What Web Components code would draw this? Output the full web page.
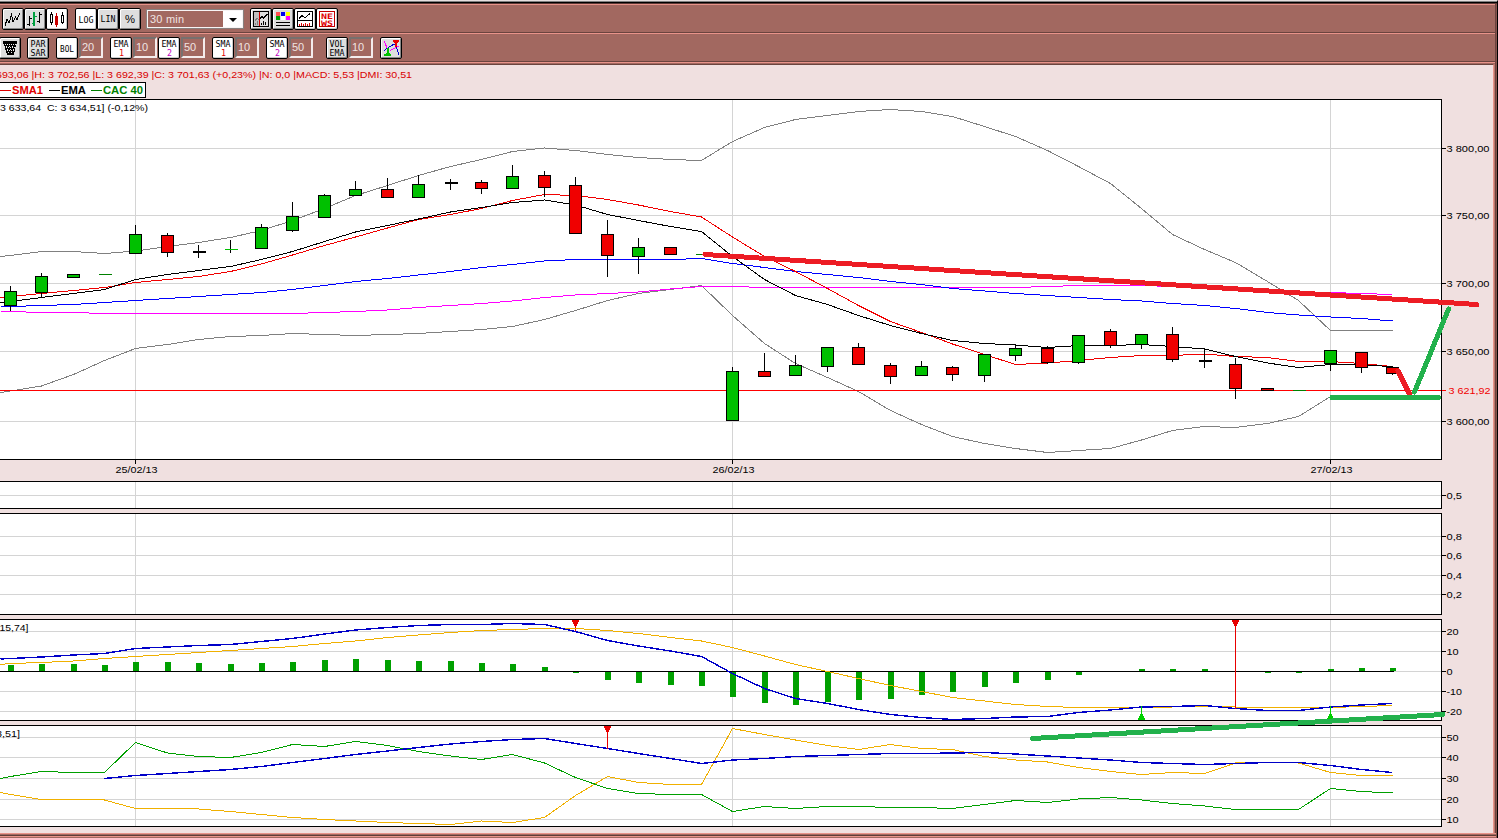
<!DOCTYPE html>
<html lang="fr">
<head>
<meta charset="utf-8">
<title>CAC 40</title>
<style>
  html, body {
    margin: 0;
    height: 838px;
    overflow: hidden;
    background: #a26860;
  }
  body {
    font-family: "Liberation Sans", Arial, sans-serif;
    font-size: 11px;
    color: #000;
  }
</style>
</head>
<body>
<trading-window>
  <tool-row slot="tools">
    <tool-button icon="line" style="margin-left:2px"></tool-button>
    <tool-button icon="ohlc"></tool-button>
    <tool-button icon="candle" active></tool-button>
    <tool-button icon="log" active style="margin-left:7px"></tool-button>
    <tool-button icon="lin"></tool-button>
    <tool-button icon="pct"></tool-button>
    <period-select style="margin-left:5px">30 min</period-select>
    <tool-button icon="split" style="margin-left:6px"></tool-button>
    <tool-button icon="colors"></tool-button>
    <tool-button icon="volume" active></tool-button>
    <tool-button icon="news" active></tool-button>
  </tool-row>
  <tool-row slot="tools" class="second">
    <tool-button icon="basket" style="margin-left:-1px"></tool-button>
    <tool-button icon="parsar" style="margin-left:6px"></tool-button>
    <tool-button icon="bol" active style="margin-left:7px"></tool-button>
    <num-field>20</num-field>
    <tool-button icon="ema1" active style="margin-left:6px"></tool-button>
    <num-field>10</num-field>
    <tool-button icon="ema2" active></tool-button>
    <num-field>50</num-field>
    <tool-button icon="sma1" active style="margin-left:6px"></tool-button>
    <num-field>10</num-field>
    <tool-button icon="sma2" active style="margin-left:6px"></tool-button>
    <num-field>50</num-field>
    <tool-button icon="volema" style="margin-left:12px"></tool-button>
    <num-field>10</num-field>
    <tool-button icon="signals" style="margin-left:6px"></tool-button>
  </tool-row>
  <quote-line></quote-line>
  <series-legend></series-legend>
  <chart-pane name="price" top="99" bottom="459" height="382"></chart-pane>
  <chart-pane name="volume" top="481" bottom="508" height="32"></chart-pane>
  <chart-pane name="empty" top="513" bottom="614" height="106"></chart-pane>
  <chart-pane name="macd" top="619" bottom="720" height="106"></chart-pane>
  <chart-pane name="dmi" top="725" bottom="826" height="106"></chart-pane>
  <trend-lines slot="overlay"></trend-lines>
</trading-window>

<script>
// Abscisse de chaque barre de 30 minutes
const X = [10, 41, 73, 104, 135, 167, 198, 230, 261, 292, 324, 355, 387, 418, 450, 481, 512, 544, 575, 607,
  638, 670, 701, 732, 764, 795, 827, 858, 890, 921, 952, 984, 1015, 1047, 1078, 1110, 1141, 1172, 1204,
  1235, 1267, 1298, 1330, 1361, 1392];

const JOURS = [[135, '25/02/13'], [732, '26/02/13'], [1330, '27/02/13']];
const DROITE = 1441;

// [haut, haut du corps, bas du corps, bas, sens]  v = hausse, r = baisse, d = doji, l = trait vert, w = trait vert et mèche
const BOUGIES = [
  [286, 291, 305, 310, 'v'], [273, 276, 292, 297, 'v'], [274, 274, 277, 277, 'v'], [274, 274, 274, 274, 'l'],
  [225, 234, 253, 253, 'v'], [233, 235, 252, 256, 'r'], [244, 251, 252, 256, 'd'], [239, 249, 249, 251, 'w'],
  [224, 227, 248, 248, 'v'], [202, 216, 230, 231, 'v'], [194, 195, 217, 217, 'v'], [181, 189, 195, 195, 'v'],
  [178, 189, 197, 197, 'r'], [175, 184, 197, 197, 'v'], [178, 182, 183, 188, 'd'], [180, 182, 188, 193, 'r'],
  [165, 176, 188, 188, 'v'], [171, 175, 187, 196, 'r'], [177, 185, 233, 233, 'r'], [220, 234, 255, 276, 'r'],
  [238, 247, 256, 273, 'v'], [247, 247, 254, 254, 'r'], [254, 254, 254, 254, 'l'], [367, 371, 420, 420, 'v'],
  [353, 371, 376, 376, 'r'], [355, 365, 375, 375, 'v'], [347, 347, 366, 371, 'v'], [343, 347, 364, 364, 'r'],
  [363, 365, 376, 383, 'r'], [361, 366, 375, 375, 'v'], [366, 367, 374, 380, 'r'], [354, 354, 375, 381, 'v'],
  [345, 348, 355, 360, 'v'], [346, 348, 362, 363, 'r'], [335, 335, 362, 363, 'v'], [329, 331, 345, 347, 'r'],
  [334, 334, 344, 348, 'v'], [327, 334, 359, 361, 'r'], [348, 360, 361, 366, 'd'], [358, 364, 388, 398, 'r'],
  [388, 388, 390, 390, 'r'], [390, 390, 390, 390, 'l'], [350, 350, 363, 370, 'v'], [352, 352, 367, 372, 'r'],
  [366, 367, 373, 374, 'r']
];

// Courbes : une ordonnée par barre, précédée du point au bord gauche
const PRIX = [
  ['#808080', 256, 255, 251, 251, 253, 250.5, 246, 242, 237, 230, 220, 208, 195, 185, 175, 166, 159, 151, 147.5, 150, 154,
    157, 159, 160, 141, 127, 119, 115, 111, 109, 111, 116, 126, 136, 150, 166, 183, 208, 234, 249, 262, 281, 300, 330, 330, 330],
  ['#808080', 392, 390.5, 385.5, 374, 360, 348, 344, 339, 336, 335, 333, 334, 335, 334, 333, 331, 329, 326, 319, 310, 300,
    293, 289, 285, 315, 343, 363, 377, 391, 410, 424, 436, 443, 448, 452, 450, 448, 439.5, 430, 426, 427, 423, 416, 396],
  ['#ff00ff', 311, 311, 312, 312, 313, 313, 313, 313, 313, 313, 313, 312, 311, 309.5, 307, 305, 303, 300.5, 297, 294.5, 293,
    291.5, 288.5, 286, 286, 287, 287, 287, 287, 287, 287, 287, 287, 287, 286, 285, 285, 285, 286, 287, 288, 289, 291, 292, 293, 294],
  ['#0000ff', 306, 306, 305, 304, 302, 300, 298, 296, 294, 292, 289, 285, 281, 278, 274.5, 271, 267, 264, 260.5, 259, 259,
    259, 259, 258, 263, 267, 271, 274, 277, 281, 284, 288, 290.5, 293, 295, 297, 299, 300.5, 303, 305, 308, 312, 314.5, 316.5, 318, 320.5],
  ['#f00000', 297, 296, 293, 290, 287, 282, 279, 276, 271, 263.5, 254.5, 245, 236.5, 227.5, 219, 214, 208, 200, 194, 195, 199,
    204.5, 211, 216.5, 236.5, 256, 271, 288, 305, 321, 332, 343.5, 354, 364, 362.5, 360, 357, 355, 355, 353.5, 356, 357, 361, 361, 363, 366],
  ['#000', 302, 301, 297, 293, 289, 279, 274, 270, 266, 259, 251, 241, 231.5, 225, 218.5, 211.5, 207, 202, 199.5, 204.5, 214,
    220, 226, 231, 256, 279, 295, 304, 315, 325, 333, 340, 343, 344.5, 347, 345, 345, 344, 346, 348.5, 356, 362.5, 367, 364, 364.5, 366]
];

const MACD = [
  ['#f0b000', 664, 663, 662, 660.5, 658, 656, 654, 652, 650, 648, 646, 643, 640.5, 637, 634.5, 632, 630, 629, 628, 628, 630,
    633, 637, 640.5, 647, 655.5, 664, 671, 678, 685, 691, 697, 700.5, 704, 706, 707, 707, 707, 706.5, 706, 706.5, 707, 707, 707, 706, 705],
  ['#0000c8', 658.5, 658, 656.5, 654.5, 653, 648, 646.5, 645, 644, 641, 638, 633.5, 629.5, 627, 625, 624, 624, 623, 624, 631, 640,
    645.5, 650.5, 656, 673, 688, 698, 703, 709, 714, 717, 719, 718, 716.5, 716, 712, 709.5, 706.5, 706, 705, 708, 710, 710, 706.5, 704.5, 703]
];

// Extrémité de chaque bâton de l'histogramme MACD, 671 = zéro
const HISTO = [665, 664, 664, 665, 662, 662, 663, 664, 663, 662, 660, 659, 660, 661, 661, 663, 664, 667, 672, 679,
  682, 684, 685, 696, 702, 704, 701, 699, 698, 694, 691, 686, 682, 679, 674, 0, 669, 669, 669, 0, 672, 672, 669, 668, 668];

const DMI = [
  ['#f0b000', 792, 794, 799, 799, 799.5, 808, 808, 808.5, 811, 814, 817, 819, 820.5, 822, 823, 824, 820.5, 822, 817, 795, 776,
    782, 784, 784, 728, 734, 739.5, 745, 749, 744, 748, 749, 756, 759.5, 761.5, 767, 771, 774, 772, 773, 762.5, 762, 762.5, 772, 775, 775],
  ['#00a000', 778, 776, 771, 772, 772, 742, 752.5, 756, 757, 752, 744, 746, 741, 745, 751, 755.5, 759, 754, 762.5, 777, 788,
    793, 794, 794, 811, 806, 808, 806, 806, 807, 807, 808, 804, 800, 802, 798.5, 797, 799.5, 803, 805.5, 809, 809, 809, 788, 791, 792.5],
  ['#0000c8', null, null, null, null, 778, 775, 773, 771, 769, 766, 762, 758, 754, 750.5, 747, 743.5, 741, 739, 738, 743, 748,
    753, 758, 763, 759.5, 758, 756, 755, 754, 753, 753, 752.5, 752, 753.5, 755.5, 757.5, 759.5, 762, 763, 764, 763, 762, 762, 765, 769, 772]
];

const AXES = {
  price: [[148, '3 800,00'], [215, '3 750,00'], [283, '3 700,00'], [351, '3 650,00'], [421, '3 600,00']],
  volume: [[495, '0,5']],
  empty: [[536, '0,8'], [555, '0,6'], [575, '0,4'], [594, '0,2']],
  macd: [[631, '20'], [651, '10'], [671, '0'], [691, '-10'], [711, '-20']],
  dmi: [[737, '50'], [757, '40'], [778, '30'], [799, '20'], [819, '10']]
};

// Largeur des libellés d'axe : chiffres 6px, virgule et espace 3px
function largeur(t) {
  let w = 0;
  for (const c of t) w += /[0-9]/.test(c) ? 6.1 : 3.2;
  return w;
}

function texte(x, y, t, w, extra = '') {
  return `<text x="${x}" y="${y}" textLength="${w}" lengthAdjust="spacingAndGlyphs" xml:space="preserve" ${extra}>${t}</text>`;
}

function courbe([couleur, ...ys], ep = 1) {
  const pts = ys.map((y, i) => y === null ? null : `${i ? X[i - 1] : 0},${y}`).filter(Boolean).join(' ');
  return `<polyline points="${pts}" fill="none" stroke="${couleur}" stroke-width="${ep}"/>`;
}

function bougie([h, a, b, l, sens], i) {
  const x = X[i];
  if (sens === 'l') return `<path d="M${x - 6} ${a}h13" stroke="#008000"/>`;
  if (sens === 'w') return `<path d="M${x} ${h}V${l + 1}" stroke="#000"/><path d="M${x - 6} ${a}h13" stroke="#00c000"/>`;
  if (sens === 'd') return `<path d="M${x} ${h}V${l + 1}M${x - 6} ${a}h13M${x - 6} ${b}h13" stroke="#000"/>`;
  return `<path d="M${x} ${h - .5}V${l + .5}" stroke="#000"/>
    <rect x="${x - 6}" y="${a}" width="12" height="${b - a}" fill="${sens === 'v' ? '#00c000' : '#f00000'}" stroke="#000"/>`;
}

function vente(x, y, fin) {
  return `<path d="M${x} ${y}V${fin}" stroke="#e80000"/>
    <path d="M${x - 3.5} ${y + .5}h7v2h-1v2h-1v2h-3v-2h-1v-2h-1z" fill="#e80000"/>`;
}

function achat(x, y, debut) {
  return `<path d="M${x} ${debut}V${y}" stroke="#00d000"/>
    <path d="M${x - 3.5} ${y - .5}h7v-2h-1v-2h-1v-2h-3v2h-1v2h-1z" fill="#00d000"/>`;
}

/**
 * Fenêtre principale : cadre, barres d'outils puis zone des graphiques.
 */
class TradingWindow extends HTMLElement {
  constructor() {
    super();
    this.attachShadow({ mode: 'open' }).innerHTML = `
      <style>
        :host {
          display: flex;
          flex-direction: column;
          position: relative;
          box-sizing: border-box;
          width: 1498px;
          height: 838px;
          border-top: 1px solid #e8e0e0;
          border-right: 1px solid #000;
        }
        .edge { height: 3px; background: linear-gradient(#808080 1px, #000 1px 2px, #5a3834 2px); }
        .frame {
          flex: 1;
          display: flex;
          flex-direction: column;
          border-right: 1px solid #87544d;
          box-shadow: inset -1px 0 #6b443f;
        }
        .body {
          height: 768px;
          width: 1493px;
          background: #f0e0e0;
          border-top: 1px solid #6b443f;
          border-right: 1px solid #e8938a;
          box-shadow: 1px 0 #b9766d;
        }
        .foot {
          height: 5px;
          background: linear-gradient(#e8938a 1px, #a26860 1px 2px, #5e3d38 2px 3px, #e8938a 3px 4px, #a26860 4px);
        }
      </style>
      <div class="edge"></div>
      <div class="frame">
        <slot name="tools"></slot>
        <div class="body"><slot></slot></div>
        <div class="foot"></div>
      </div>
      <slot name="overlay"></slot>`;
  }
}

/** Rangée d'outils avec son relief en bas. */
class ToolRow extends HTMLElement {
  constructor() {
    super();
    this.attachShadow({ mode: 'open' }).innerHTML = `
      <style>
        :host {
          display: flex;
          align-items: flex-start;
          box-sizing: border-box;
          width: 1495px;
          height: 29px;
          padding-top: 3px;
          border-top: 1px solid #e8938a;
          border-bottom: 1px solid #6b443f;
          background: #a26860;
        }
        :host(.second) { height: 31px; border-bottom: 0; box-shadow: inset 0 -1px #a26860, inset 0 -2px #e8938a, inset 0 -3px #6b443f; }
      </style>
      <slot></slot>`;
  }
}

const noir = 'fill="none" stroke="#000"';
const deuxLignes = (a, b, c2 = '#000', x2 = 1.5, w2 = 15) =>
  texte(1.5, 8, a, 15, 'font-size="9"') + texte(x2, 16.5, b, w2, `font-size="9" fill="${c2}"`);

const ICONES = {
  line: `<path d="M1 15.500L3 9.500L5 13L7.500 5L9 12L11.500 7L13 9.500L16 3" ${noir}/>`,
  ohlc: `<path d="M3.500 6v10M1 14.500h2M4 8.500h2M13.500 2v11M11 11.500h2M14 4.500h2" ${noir}/>
    <path d="M8 2v14" fill="none" stroke="#00a040" stroke-width="2"/><path d="M6 13.500h2M9 6.500h2" stroke="#00a040"/>`,
  candle: `<path d="M3.500 2v2M3.500 12v3M14.500 2v3M14.500 12v2" ${noir}/><path d="M2.500 4.500h2v8h-2zM13.500 5.500h2v7h-2z" ${noir}/>
    <path d="M8.500 3v14" stroke="#c80000"/><rect x="7" y="6" width="3" height="9" fill="#c80000"/>`,
  log: texte(1.5, 13, 'LOG', 15, 'font-size="9.5"'),
  lin: texte(1.5, 12, 'LIN', 15, 'font-size="9.5"'),
  pct: texte(4, 13, '%', 10, 'font-size="11" font-family="Liberation Sans, sans-serif"'),
  split: `<rect x="1" y="1" width="7" height="16" fill="#c0c0c0"/><rect x="1.500" y="1.500" width="15" height="15" ${noir}/>
    <path d="M3.500 15v-2M5.500 15v-4" stroke="#808080"/><path d="M9.500 15v-2M11.500 15v-4M13.500 15v-3" stroke="#000"/>
    <path d="M3 11L5 8L7 10" fill="none" stroke="#808080"/><path d="M8 8.500L10 6.500L11.500 8L15.500 4" ${noir}/><path d="M7.500 2v14" stroke="#d00000"/>`,
  colors: `<path d="M2 2h4v4H2z" fill="#ff5050"/><path d="M7 2h4v4H7z" fill="#0000f0"/><path d="M12 2h4v4h-4z" fill="#ff0"/>
    <path d="M2 6h4v4H2z" fill="#00a000"/><path d="M7 6h4v4H7z" fill="#fff"/><path d="M12 6h4v4h-4z" fill="#f0f"/>
    <path d="M2 12h14v1H2zM2 15h14v1H2z"/>`,
  volume: `<rect x="1.500" y="1.500" width="15" height="15" ${noir}/><path d="M1 10.500h16" stroke="#000"/>
    <path d="M3 8.500L6 5.500L9 8L14 3.500" ${noir}/><path d="M3.500 16v-2M5.500 16v-3M7.500 16v-2M9.500 16v-3M11.500 16v-2M13.500 16v-3" stroke="#e00000"/>`,
  news: `<rect x="1.500" y="1.500" width="15" height="15" fill="none" stroke="#c00000"/>` +
    texte(3, 8.500, 'NE', 12, 'font-size="7.5" font-weight="bold" fill="#e00000"') +
    texte(3, 15.500, 'WS', 12, 'font-size="7.5" font-weight="bold" fill="#e00000"'),
  basket: `<path d="M2 2h14v3h-1l-2 11H6L3 5H2z"/><path d="M4 5.500h11M5 8.500h9M6 11.500h7" stroke="#eee" stroke-dasharray="1 1"/>
    <path d="M5 7h9M6 10h7M7 13h5" stroke="#eee" stroke-dasharray="1 2"/>`,
  parsar: deuxLignes('PAR', 'SAR'),
  bol: texte(2, 13, 'BOL', 14, 'font-size="9.5"'),
  ema1: deuxLignes('EMA', '1', '#e00000', 7, 5),
  ema2: deuxLignes('EMA', '2', '#c000c0', 7, 5),
  sma1: deuxLignes('SMA', '1', '#e00000', 7, 5),
  sma2: deuxLignes('SMA', '2', '#c000c0', 7, 5),
  volema: deuxLignes('VOL', 'EMA'),
  signals: `<path d="M2 2L6 11M8 11.500L17 7" fill="none" stroke="#f0f"/>
    <path d="M2 11.500L12 5L14 7L17 16" fill="none" stroke="#0000d0"/>
    <path d="M11 1h6v2h-1v1h-1v4h-2V4h-1V3h-1z" fill="#e80000"/><path d="M2 17h7v-2h-1v-1h-1V9H5v5H4v1H2z" fill="#00c000"/>`
};

/** Bouton carré de 22px ; attribut icon = clé de ICONES, active = fond blanc. */
class ToolButton extends HTMLElement {
  constructor() {
    super();
    this.attachShadow({ mode: 'open' });
  }
  connectedCallback() {
    this.shadowRoot.innerHTML = `
      <style>
        :host {
          display: block;
          box-sizing: border-box;
          flex: none;
          width: 22px;
          height: 22px;
          border: 1px solid #000;
          border-radius: 2px;
          padding: 1px;
          background: #dedede;
          box-shadow: inset 1px 1px #fff, inset -1px -1px #888;
        }
        :host([active]) { background: #fff; box-shadow: inset -1px -1px #ccc; }
        svg { display: block; overflow: visible; }
      </style>
      <svg width="18" height="18" viewBox="0 0 18 18" font-family="DejaVu Sans Mono, monospace" shape-rendering="crispEdges">
        ${ICONES[this.getAttribute('icon')]}
      </svg>`;
  }
}

class NumField extends HTMLElement {
  constructor() {
    super();
    this.attachShadow({ mode: 'open' }).innerHTML = `
      <style>
        :host {
          display: block;
          box-sizing: border-box;
          flex: none;
          width: 24px;
          height: 21px;
          margin: 0 1px 0 1px;
          padding: 2px 0 0 1px;
          border: 2px solid;
          border-color: #77706e #f4ecec #f4ecec #77706e;
          color: #f0e4e2;
          font-size: 11px;
          line-height: 13px;
        }
      </style>
      <slot></slot>`;
  }
}

class PeriodSelect extends HTMLElement {
  constructor() {
    super();
    this.attachShadow({ mode: 'open' }).innerHTML = `
      <style>
        :host {
          display: flex;
          box-sizing: border-box;
          width: 98px;
          height: 20px;
          margin-top: 1px;
          border: 2px solid #f8f4f4;
          outline: 1px solid #88807e;
          outline-offset: -1px;
          color: #f0e4e2;
        }
        span { flex: 1; padding-left: 2px; line-height: 17px; letter-spacing: .2px; }
        i { width: 19px; background: #fff; display: grid; place-items: center; }
        i::before { content: ""; margin-top: 2px; border: 4px solid transparent; border-top-color: #000; border-bottom: 0; }
      </style>
      <span><slot></slot></span><i></i>`;
  }
}

class QuoteLine extends HTMLElement {
  constructor() {
    super();
    this.attachShadow({ mode: 'open' }).innerHTML = `
      <style>
        :host { display: block; height: 17px; }
        svg { display: block; overflow: visible; font-size: 9.700px; fill: #d80000; }
      </style>
      <svg width="480" height="17">
        ${texte(-4, 13, '693,06 |H: 3 702,56 |L: 3 692,39 |C: 3 701,63 (+0,23%) |N: 0,0 |MACD: 5,53 |DMI: 30,51', 416)}
      </svg>`;
  }
}

class SeriesLegend extends HTMLElement {
  constructor() {
    super();
    this.attachShadow({ mode: 'open' }).innerHTML = `
      <style>
        :host { display: block; height: 17px; }
        svg {
          display: block;
          box-sizing: border-box;
          background: #fff;
          border: 1px solid #000;
          border-left: 0;
          font-size: 11px;
          font-weight: bold;
        }
      </style>
      <svg width="146" height="16">
        <path d="M0 7h11v1H0z" fill="#e00000"/>${texte(12, 11, 'SMA1', 31, 'fill="#e00000"')}
        <path d="M49 7h11v1H49z"/>${texte(61, 11, 'EMA', 25)}
        <path d="M91 7h11v1H91z" fill="#008000"/>${texte(103, 11, 'CAC 40', 40, 'fill="#008000"')}
      </svg>`;
  }
}

/**
 * Un panneau de graphique : fond blanc, grille, courbes et axe à droite.
 * Le viewBox commence à l'ordonnée du panneau, les données sont en pixels.
 */
class ChartPane extends HTMLElement {
  constructor() {
    super();
    this.attachShadow({ mode: 'open' });
  }

  connectedCallback() {
    const nom = this.getAttribute('name');
    const haut = +this.getAttribute('top');
    const bas = +this.getAttribute('bottom');
    const h = +this.getAttribute('height');
    this.shadowRoot.innerHTML = `
      <style>
        :host { display: block; height: ${h}px; }
        svg { display: block; font-size: 9.700px; }
      </style>
      <svg width="1493" height="${h}" viewBox="0 ${haut} 1493 ${h}">
        <g shape-rendering="crispEdges" transform="translate(.5 .5)">
          <rect x="-5" y="${haut}" width="${DROITE + 5}" height="${bas - haut}" fill="#fff"/>
          ${AXES[nom].map(([y]) => `<path d="M-1 ${y}H${DROITE}" stroke="#d4d4d4"/>`).join('')}
          ${JOURS.map(([x]) => `<path d="M${x} ${haut}V${bas}" stroke="#d4d4d4"/>`).join('')}
          ${this[nom] ? this[nom]() : ''}
          <rect x="-5" y="${haut}" width="${DROITE + 5}" height="${bas - haut}" fill="none" stroke="#000"/>
          ${AXES[nom].map(([y]) => `<path d="M${DROITE} ${y}h4" stroke="#000"/>`).join('')}
        </g>
        ${AXES[nom].map(([y, t]) => texte(1446.5, y + 4, t, largeur(t))).join('')}
        ${this.libelles(nom)}
      </svg>`;
  }

  price() {
    return PRIX.map(c => courbe(c)).join('') +
      `<path d="M-1 390H1445" stroke="#ff0000"/>` +
      BOUGIES.map(bougie).join('') +
      JOURS.map(([x]) => `<path d="M${x} 459v4" stroke="#000"/>`).join('');
  }

  macd() {
    const batons = HISTO.map((y, i) => y ?
      `<rect x="${X[i] - 2.5}" y="${Math.min(y, 671) - .5}" width="6" height="${Math.abs(671 - y) + (y > 671 ? 1 : 0)}" fill="#00a000"/>` : '');
    return batons.join('') + `<path d="M-1 671H1393" stroke="#000"/>` +
      vente(575, 619, 631) + MACD.map((c, i) => courbe(c, i ? 1.4 : 1)).join('') +
      vente(1235, 619, 708) + achat(1141, 720, 705) + achat(1330, 720, 705);
  }

  dmi() {
    return DMI.map((c, i) => courbe(c, i === 2 ? 1.4 : 1)).join('') + vente(607, 725, 748);
  }

  libelles(nom) {
    if (nom === 'price') {
      return texte(0, 111, '3 633,64  C: 3 634,51] (-0,12%)', 148) +
        texte(1448.5, 394, '3 621,92', 42, 'fill="#f00000"') +
        JOURS.map(([x, t]) => texte(x - 19.5, 473, t, 42)).join('');
    }
    if (nom === 'macd') return texte(-.5, 631, '15,74]', 29);
    if (nom === 'dmi') return texte(-4, 737, '8,51]', 24);
    return '';
  }
}

/** Tracés à main levée posés sur les graphiques. */
class TrendLines extends HTMLElement {
  constructor() {
    super();
    this.attachShadow({ mode: 'open' }).innerHTML = `
      <style>
        :host { position: absolute; left: 0; top: -1px; pointer-events: none; }
        svg { display: block; }
      </style>
      <svg width="1497" height="838" fill="none" stroke-width="5" stroke-linecap="round" shape-rendering="crispEdges">
        <g stroke="#ed1c24">
          <path d="M705 254.500L1477 304.500"/>
          <path d="M1398 371L1410 395"/>
        </g>
        <g stroke="#22b14c">
          <path d="M1332 397.500H1438.500"/>
          <path d="M1414.500 392L1448.500 309"/>
          <path d="M1032.500 738.500L1443 714.500"/>
        </g>
      </svg>`;
  }
}

customElements.define('trading-window', TradingWindow);
customElements.define('tool-row', ToolRow);
customElements.define('tool-button', ToolButton);
customElements.define('num-field', NumField);
customElements.define('period-select', PeriodSelect);
customElements.define('quote-line', QuoteLine);
customElements.define('series-legend', SeriesLegend);
customElements.define('chart-pane', ChartPane);
customElements.define('trend-lines', TrendLines);
</script>
</body>
</html>
